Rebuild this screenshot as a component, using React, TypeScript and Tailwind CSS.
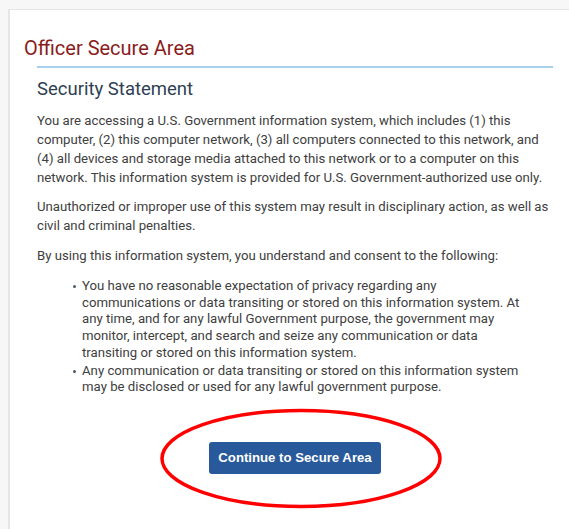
import React from "react";

const bodyFont = { fontFamily: "Roboto, 'Noto Sans', sans-serif" };

const items = [
  "You have no reasonable expectation of privacy regarding any communications or data transiting or stored on this information system. At any time, and for any lawful Government purpose, the government may monitor, intercept, and search and seize any communication or data transiting or stored on this information system.",
  "Any communication or data transiting or stored on this information system may be disclosed or used for any lawful government purpose.",
];

export default function App() {
  return (
    <div className="relative w-[569px] h-[529px] overflow-hidden bg-[#f7f7f7] pt-[9px] pl-[8px]" style={bodyFont}>
      <div className="h-full bg-white border-l-2 border-t border-[#e6e6e6] pl-[14px]">
        <h1 className="mt-[26px] text-[20px] leading-[24px] text-[#8b1c1c]">Officer Secure Area</h1>
        <div className="ml-[13px] w-[516px]">
          <div className="mt-[6px] h-[2px] bg-[#a9d0ea]" />
          <h2 className="mt-[10px] text-[18.5px] leading-[22px] text-[#2e3f52]">Security Statement</h2>
          <div className="mt-[11px] w-[520px] text-[13.2px] leading-[19px] text-[#404040]">
            <p>
              You are accessing a U.S. Government information system, which includes (1) this computer, (2) this
              computer network, (3) all computers connected to this network, and (4) all devices and storage media
              attached to this network or to a computer on this network. This information system is provided for U.S.
              Government-authorized use only.
            </p>
            <p className="mt-[10px]">
              Unauthorized or improper use of this system may result in disciplinary action, as well as civil and
              criminal penalties.
            </p>
            <p className="mt-[11px]">By using this information system, you understand and consent to the following:</p>
            <ul className="mt-[13px] pl-[36px] pr-[28px] leading-[16.7px]">
              {items.map((t, i) => (
                <li key={t} className={i > 0 ? "flex mt-[1px]" : "flex"}>
                  <span className="w-[9px] shrink-0 pt-[7px]">
                    <span className="block w-[3px] h-[3px] rounded-full bg-[#4a5a6a]" />
                  </span>
                  <span>{t}</span>
                </li>
              ))}
            </ul>
          </div>
          <div className="mt-[46px] flex justify-center">
            <button
              className="h-[32px] px-[9px] rounded-[3px] bg-[#285a9b] text-white text-[13.2px] font-bold"
              style={{ fontFamily: "'Liberation Sans', Arial, sans-serif" }}
            >
              Continue to Secure Area
            </button>
          </div>
        </div>
      </div>
      <svg className="absolute left-[160px] top-[408px]" width="284" height="102" viewBox="0 0 284 102">
        <ellipse cx="141" cy="50.5" rx="139" ry="48" fill="none" stroke="#ff0000" strokeWidth="3.5" />
      </svg>
    </div>
  );
}
